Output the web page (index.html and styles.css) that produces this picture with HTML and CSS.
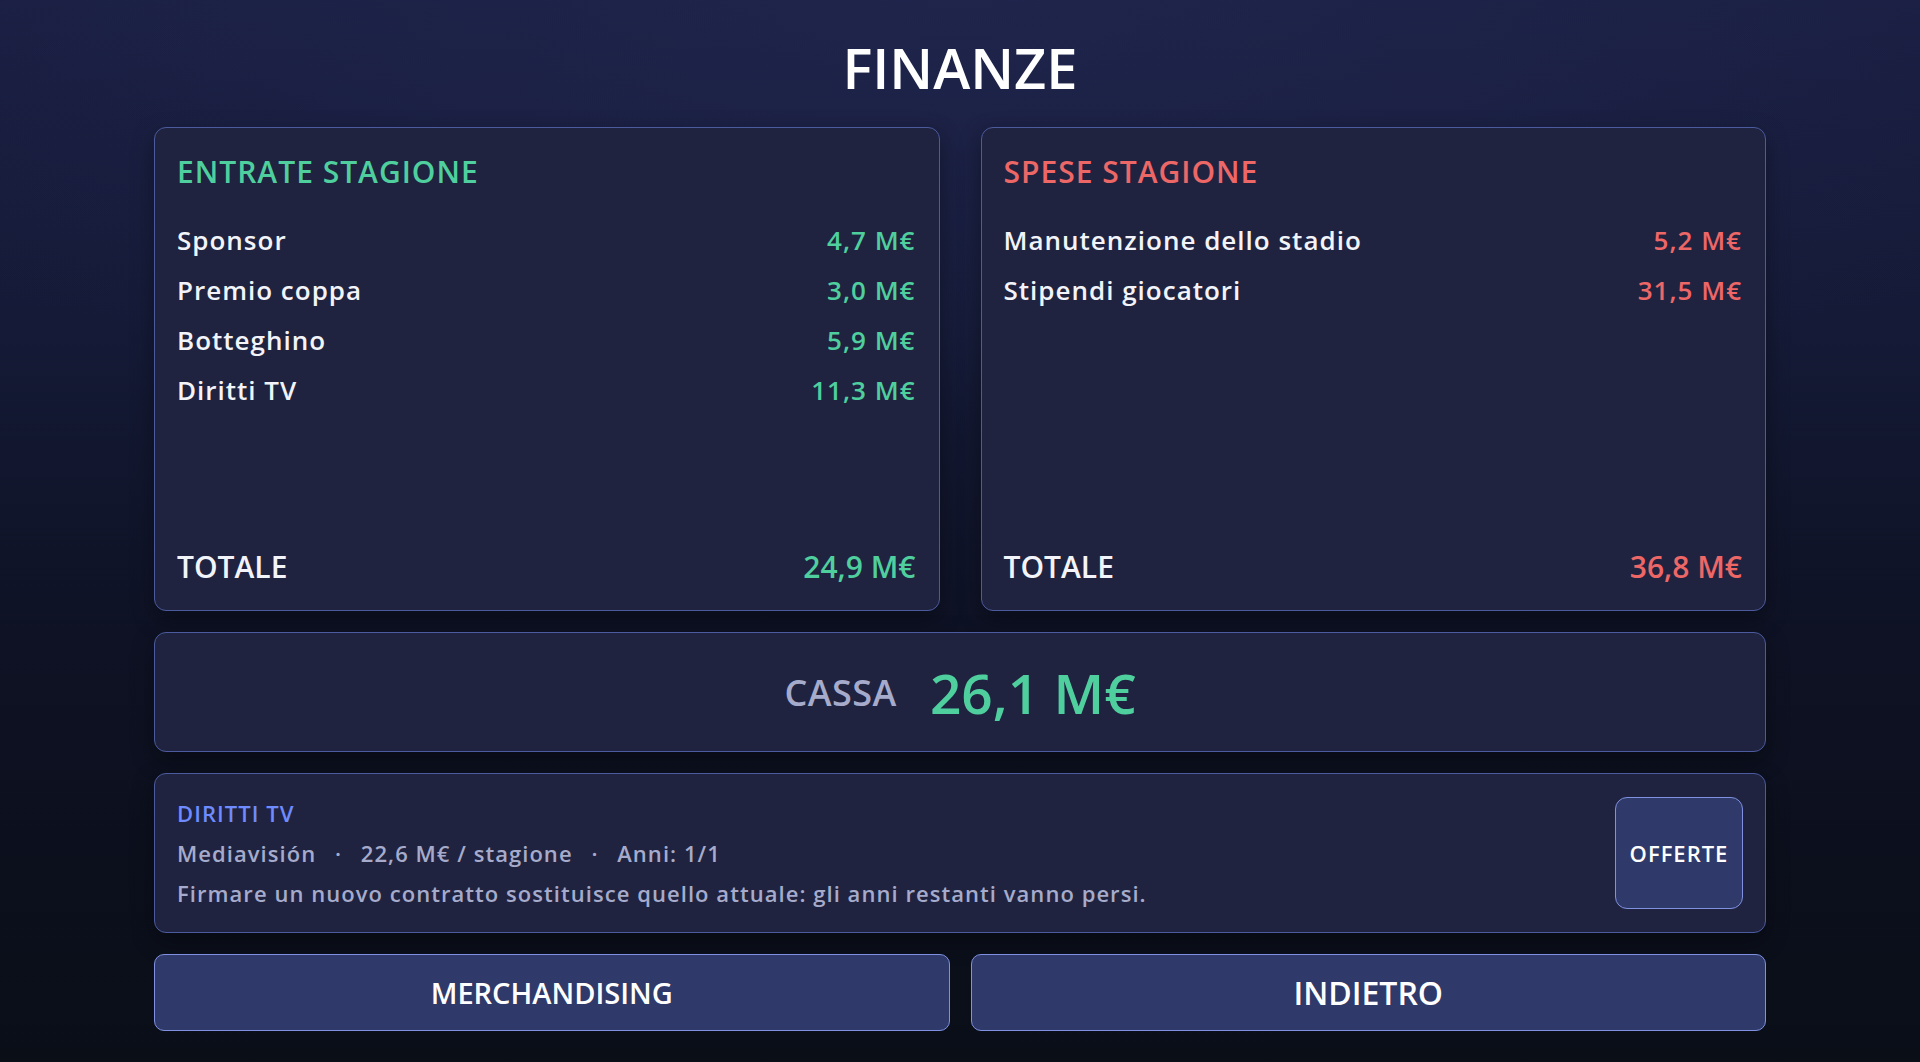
FILE: index.html
```html
<!DOCTYPE html>
<html lang="it">
<head>
    <meta charset="UTF-8">
    <meta name="viewport" content="width=device-width, initial-scale=1.0">
    <title>Finanze</title>
    <link rel="stylesheet" href="styles.css">
</head>
<body>
    <div class="finance">
        <h1>FINANZE</h1>
        <main class="panels">
            <div class="season">
                <section class="card">
                    <h2 class="income">ENTRATE STAGIONE</h2>
                    <ul class="rows">
                        <li><span>Sponsor</span><span class="income">4,7 M€</span></li>
                        <li><span>Premio coppa</span><span class="income">3,0 M€</span></li>
                        <li><span>Botteghino</span><span class="income">5,9 M€</span></li>
                        <li><span>Diritti TV</span><span class="income">11,3 M€</span></li>
                    </ul>
                    <div class="total"><span>TOTALE</span><span class="income">24,9 M€</span></div>
                </section>
                <section class="card">
                    <h2 class="expense">SPESE STAGIONE</h2>
                    <ul class="rows">
                        <li><span>Manutenzione dello stadio</span><span class="expense">5,2 M€</span></li>
                        <li><span>Stipendi giocatori</span><span class="expense">31,5 M€</span></li>
                    </ul>
                    <div class="total"><span>TOTALE</span><span class="expense">36,8 M€</span></div>
                </section>
            </div>

            <section class="cash">
                <span class="cash-label">CASSA</span>
                <span class="cash-value">26,1 M€</span>
            </section>

            <!-- contratto diritti tv -->
            <section class="contract">
                <div class="contract-info">
                    <p class="contract-title">DIRITTI TV</p>
                    <p>Mediavisión <span class="dot">·</span> 22,6 M€ / stagione <span class="dot">·</span> Anni: 1/1</p>
                    <p>Firmare un nuovo contratto sostituisce quello attuale: gli anni restanti vanno persi.</p>
                </div>
                <button class="offers">OFFERTE</button>
            </section>

            <nav class="actions">
                <button class="btn">MERCHANDISING</button>
                <button class="btn btn-back">INDIETRO</button>
            </nav>
        </main>
    </div>
</body>
</html>
```

FILE: styles.css
```css
body {
    margin: 0;
    height: 1062px;
    overflow: hidden;
    background:
        radial-gradient(ellipse 70% 40% at 50% 0%, rgba(36, 42, 84, 0.55), rgba(36, 42, 84, 0) 100%),
        linear-gradient(180deg, #191e41 0%, #151a37 30%, #0e1224 60%, #0a0e17 100%);
    color: #f3f4fa;
    font-family: 'Open Sans', 'Noto Sans', sans-serif;
    font-weight: 600;
}
.finance {
    width: 1612px;
    margin: 0 auto;
    padding-top: 39px;
}
h1 {
    margin: 0 0 32px;
    font-size: 56px;
    line-height: 56px;
    font-weight: 600;
    text-align: center;
    color: #ffffff;
}
.panels {
    display: flex;
    flex-direction: column;
    gap: 21px;
}
.season {
    display: grid;
    grid-template-columns: 1fr 1fr;
    gap: 41px;
}
.card,
.cash,
.contract {
    box-sizing: border-box;
    background-color: #1f2340;
    border: 1px solid #4b5b9e;
    border-radius: 12px;
    box-shadow: 0 8px 22px rgba(0, 0, 0, 0.35);
}
.card {
    height: 484px;
    padding: 26px 23px 25px 22px;
    display: flex;
    flex-direction: column;
    letter-spacing: 1px;
}
h2 {
    margin: 0;
    font-size: 30px;
    line-height: 36px;
    font-weight: 600;
}
.income {
    color: #4fcf9e;
}
.expense {
    color: #ee6767;
}
.rows {
    list-style: none;
    margin: 25px 0 0;
    padding: 0;
}
.rows li {
    display: flex;
    justify-content: space-between;
    font-size: 26px;
    line-height: 50px;
}
.total {
    margin-top: auto;
    display: flex;
    justify-content: space-between;
    font-size: 30px;
    line-height: 36px;
    letter-spacing: 0;
}
.cash {
    height: 120px;
    display: flex;
    align-items: center;
    justify-content: center;
    gap: 33px;
}
.cash-label {
    font-size: 36px;
    letter-spacing: 0.5px;
    color: #a6abcb;
}
.cash-value {
    font-size: 55px;
    color: #4fcf9e;
}
.contract {
    height: 160px;
    padding: 0 22px;
    display: flex;
    align-items: center;
    justify-content: space-between;
}
.contract p {
    margin: 0;
    font-size: 22px;
    line-height: 40px;
    letter-spacing: 1.05px;
    color: #a6abcb;
}
.contract .contract-title {
    color: #6e8bff;
}
.dot {
    margin: 0 12px;
}
button {
    font-family: inherit;
    font-weight: 600;
    color: #ffffff;
    background-color: #2f3a6a;
    border: 1px solid #7f91e0;
    cursor: pointer;
}
button:hover {
    background-color: #3a4680;
}
.offers {
    width: 128px;
    height: 112px;
    border-radius: 12px;
    font-size: 22px;
    letter-spacing: 1px;
    padding: 0;
}
.actions {
    display: grid;
    grid-template-columns: 1fr 1fr;
    gap: 21px;
}
.btn {
    height: 77px;
    border-radius: 10px;
    font-size: 29px;
}
.btn-back {
    font-size: 32px;
}
```
